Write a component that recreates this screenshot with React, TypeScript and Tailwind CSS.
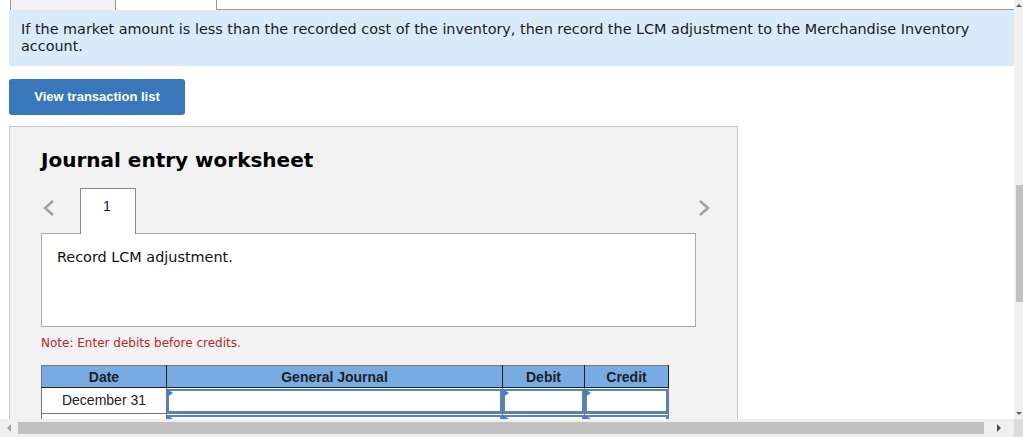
import React from "react"

const verdana = { fontFamily: '"DejaVu Sans", Verdana, sans-serif' }
const arial = { fontFamily: '"Liberation Sans", Arial, sans-serif' }

function Chevron({ dir }: { dir: "left" | "right" }) {
  return (
    <svg width="12" height="16" viewBox="0 0 12 16" className="block">
      <polyline
        points={dir === "left" ? "10,1 2,8 10,15" : "2,1 10,8 2,15"}
        fill="none"
        stroke="#9aa0a8"
        strokeWidth="2.4"
      />
    </svg>
  )
}

function InputCell() {
  return (
    <td className="border border-[#777] p-0 h-[26px]">
      <div className="relative h-[24px] border-2 border-[#4f86c6] bg-white">
        <span className="absolute -left-[2px] -top-[2px] w-0 h-0 border-t-[4px] border-b-[4px] border-l-[6px] border-t-transparent border-b-transparent border-l-[#3f7fcf]" />
      </div>
    </td>
  )
}

export default function App() {
  return (
    <div className="w-[1023px] h-[437px] flex flex-col bg-white overflow-hidden">
      <div className="flex flex-1 min-h-0">
        {/* PAGE */}
        <div className="flex-1 pl-[9px] overflow-hidden">
          {/* tabs strip */}
          <div className="flex h-[10px] pl-[1px]">
            <div className="w-[106px] h-[10px] bg-[#f2f2f2] border-l border-r border-[#999]" />
            <div className="w-[101px] h-[10px] bg-white border-r border-[#999]" />
            <div className="flex-1 h-[10px] border-b border-[#999]" />
          </div>

          {/* info */}
          <div
            className="bg-[#d9ebf9] h-[56px] px-[12px] pt-[11px] text-[14.4px] leading-[17px] text-[#1a1a1a]"
            style={verdana}
          >
            If the market amount is less than the recorded cost of the inventory, then record the LCM adjustment to the Merchandise Inventory account.
          </div>

          <button
            className="mt-[13px] w-[176px] h-[36px] rounded-[3px] bg-[#3a76ba] text-white text-[13px] font-bold"
            style={arial}
          >
            View transaction list
          </button>

          {/* worksheet */}
          <div className="mt-[11px] w-[729px] h-[320px] bg-[#f2f2f2] border border-[#c8c8c8] px-[31px]">
            <h1
              className="pt-[20px] text-[20px] leading-[26px] font-bold text-black"
              style={verdana}
            >
              Journal entry worksheet
            </h1>

            <div className="mt-[15px] flex items-end h-[46px]">
              <div className="w-[39px] h-[46px] flex items-center pl-[2px] pb-[6px]">
                <Chevron dir="left" />
              </div>
              <div
                className="relative z-10 w-[56px] h-[46px] bg-white border border-b-0 border-[#888] flex justify-center pt-[9px] pr-[2px] text-[14px] leading-[16px] text-[#0b1a4a]"
                style={arial}
              >
                1
              </div>
              <div className="flex-1" />
              <div className="w-[20px] h-[46px] flex items-center pb-[6px] mr-[-12px]">
                <Chevron dir="right" />
              </div>
            </div>

            <div
              className="-mt-[1px] w-[655px] h-[94px] bg-white border border-[#aaa] pl-[15px] pt-[15px] text-[14.4px] leading-[17px] text-[#111]"
              style={verdana}
            >
              Record LCM adjustment.
            </div>

            <div
              className="mt-[8px] text-[12px] leading-[16px] text-[#b3282d]"
              style={verdana}
            >
              Note: Enter debits before credits.
            </div>

            <table
              className="mt-[14px] border-collapse w-[627px] table-fixed"
              style={arial}
            >
              <colgroup>
                <col className="w-[125px]" />
                <col className="w-[336px]" />
                <col className="w-[82px]" />
                <col className="w-[84px]" />
              </colgroup>
              <thead>
                <tr className="bg-[#78abe2] h-[22px] text-[14px] leading-[16px] font-bold text-[#1f1f1f]">
                  <th className="border border-[#777] border-b-[#222] border-r-[#222] p-0">Date</th>
                  <th className="border border-[#777] border-b-[#222] border-r-[#222] p-0">General Journal</th>
                  <th className="border border-[#777] border-b-[#222] border-r-[#222] p-0">Debit</th>
                  <th className="border border-[#777] border-b-[#222] border-r-[#222] p-0">Credit</th>
                </tr>
              </thead>
              <tbody>
                <tr className="bg-white">
                  <td className="border border-[#777] h-[26px] p-0 text-center text-[14px] text-[#222]">
                    December 31
                  </td>
                  <InputCell />
                  <InputCell />
                  <InputCell />
                </tr>
                <tr className="bg-white">
                  <td className="border border-[#777] h-[26px] p-0" />
                  <InputCell />
                  <InputCell />
                  <InputCell />
                </tr>
              </tbody>
            </table>
          </div>
        </div>

        {/* vertical scrollbar */}
        <div className="w-[9px] bg-[#f0f0f0] flex flex-col items-end">
          <div className="h-[10px] w-full flex items-center justify-end pr-[1px]">
            <span className="w-0 h-0 border-l-[3px] border-r-[3px] border-b-[3px] border-l-transparent border-r-transparent border-b-[#606060]" />
          </div>
          <div className="mt-[175px] w-[7px] h-[117px] bg-[#c1c1c1]" />
          <div className="flex-1" />
          <div className="h-[12px] w-full flex items-center justify-end pr-[1px]">
            <span className="w-0 h-0 border-l-[3px] border-r-[3px] border-t-[3px] border-l-transparent border-r-transparent border-t-[#606060]" />
          </div>
        </div>
      </div>

      {/* horizontal scrollbar */}
      <div className="h-[18px] flex bg-[#f0f0f0] items-center">
        <div className="w-[18px] h-[18px] flex items-center justify-center">
          <span className="w-0 h-0 border-t-[4px] border-b-[4px] border-r-[4px] border-t-transparent border-b-transparent border-r-[#a3a3a3]" />
        </div>
        <div className="w-[966px] h-[12px] bg-[#c1c1c1]" />
        <div className="flex-1 flex items-center justify-center">
          <span className="w-0 h-0 border-t-[4px] border-b-[4px] border-l-[4px] border-t-transparent border-b-transparent border-l-[#505050]" />
        </div>
        <div className="w-[9px] h-[18px] bg-[#dcdcdc]" />
      </div>
    </div>
  )
}
